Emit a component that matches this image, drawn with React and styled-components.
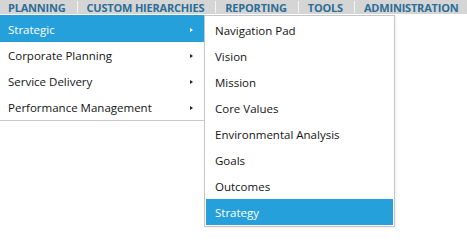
import React from 'react'
import styled, { createGlobalStyle } from 'styled-components'

const GlobalStyle = createGlobalStyle`
    html, body {
        margin:0;
        padding:0;
        background:#fff;
    }
    body {
        font-family: "Open Sans", "Noto Sans", sans-serif;
    }
`

const topItems = ['Planning', 'Custom Hierarchies', 'Reporting', 'Tools', 'Administration']

const mainItems = [
    { label: 'Strategic', active: true },
    { label: 'Corporate Planning' },
    { label: 'Service Delivery' },
    { label: 'Performance Management' },
]

const subItems = [
    'Navigation Pad',
    'Vision',
    'Mission',
    'Core Values',
    'Environmental Analysis',
    'Goals',
    'Outcomes',
    'Strategy',
]

const App = () => {
    return (
        <Page>
            <GlobalStyle />
            <TopBar>
                {topItems.map((item, i) => (
                    <TopItem key={item} first={i === 0}>{item}</TopItem>
                ))}
            </TopBar>
            <MenuArea>
                <MainMenu>
                    {mainItems.map(item => (
                        <MainItem key={item.label} active={item.active}>
                            <span>{item.label}</span>
                            <Arrow active={item.active} />
                        </MainItem>
                    ))}
                </MainMenu>
                <SubMenu>
                    {subItems.map(item => (
                        <SubItem key={item} active={item === 'Strategy'}>{item}</SubItem>
                    ))}
                </SubMenu>
            </MenuArea>
        </Page>
    )
}

export default App

const Page = styled.div`
    width:467px;
    height:248px;
    overflow:hidden;
`

const TopBar = styled.div`
    display:flex;
    align-items:stretch;
    height:14px;
    background:#d5d5d5;
    border-bottom:1px solid #fff;
`

const TopItem = styled.div`
    position:relative;
    padding:1px 11px 0 ${p => (p.first ? '8px' : '10px')};
    line-height:14px;
    font-family:"Open Sans", sans-serif;
    font-weight:700;
    font-size:11px;
    text-transform:uppercase;
    color:#2b6e96;
    letter-spacing:-0.2px;
    white-space:nowrap;
    &::before{
        content:'';
        display:${p => (p.first ? 'none' : 'block')};
        position:absolute;
        left:0;
        top:1px;
        bottom:1px;
        width:1px;
        background:#f4f4f4;
    }
`

const MenuArea = styled.div`
    display:flex;
    align-items:flex-start;
`

const MainMenu = styled.div`
    width:204px;
    background:#fff;
    border-bottom:1px solid #c9c9c9;
`

const MainItem = styled.div`
    display:flex;
    align-items:center;
    justify-content:space-between;
    height:26px;
    padding:1px 11px 0 8px;
    box-sizing:border-box;
    font-size:11.5px;
    color:${p => (p.active ? '#fff' : '#141414')};
    background:${p => (p.active ? '#26a0da' : '#fff')};
    &:first-child{
        height:27px;
    }
`

const Arrow = styled.i`
    width:0;
    height:0;
    border-top:2.5px solid transparent;
    border-bottom:2.5px solid transparent;
    border-left:3px solid ${p => (p.active ? '#fff' : '#222')};
    margin-top:1px;
`

const SubMenu = styled.div`
    width:187px;
    background:#fff;
    border:1px solid #c6c6c6;
    padding:1px;
    box-shadow:1px 1px 2px rgba(0,0,0,0.08);
`

const SubItem = styled.div`
    display:flex;
    align-items:center;
    height:26px;
    padding:1px 9px 0;
    box-sizing:border-box;
    font-size:11.5px;
    color:${p => (p.active ? '#fff' : '#141414')};
    background:${p => (p.active ? '#26a0da' : '#fff')};
`
